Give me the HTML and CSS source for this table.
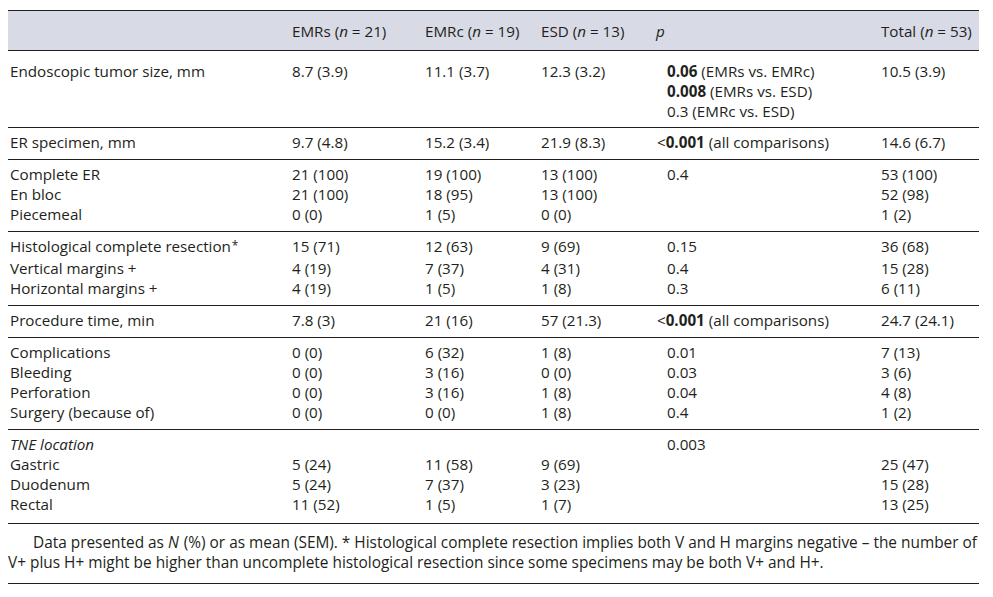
FILE: index.html
```html
<!DOCTYPE html>
<html lang="en">
<head>
<meta charset="utf-8">
<title>Endoscopic resection outcomes</title>
<link rel="stylesheet" href="styles.css">
</head>
<body>
<div class="wrap">
<table class="data">
  <colgroup>
    <col class="c-label"><col class="c-emrs"><col class="c-emrc"><col class="c-esd"><col class="c-p"><col class="c-total">
  </colgroup>
  <thead>
    <tr>
      <th></th>
      <th>EMRs (<i>n</i> = 21)</th>
      <th>EMRc (<i>n</i> = 19)</th>
      <th>ESD (<i>n</i> = 13)</th>
      <th><i>p</i></th>
      <th>Total (<i>n</i> = 53)</th>
    </tr>
  </thead>
  <tbody class="first">
    <tr>
      <td>Endoscopic tumor size, mm</td>
      <td>8.7 (3.9)</td>
      <td>11.1 (3.7)</td>
      <td>12.3 (3.2)</td>
      <td class="pv"><div><b>0.06</b> (EMRs vs. EMRc)</div><div><b>0.008</b> (EMRs vs. ESD)</div><div>0.3 (EMRc vs. ESD)</div></td>
      <td>10.5 (3.9)</td>
    </tr>
  </tbody>
  <tbody>
    <tr>
      <td>ER specimen, mm</td>
      <td>9.7 (4.8)</td>
      <td>15.2 (3.4)</td>
      <td>21.9 (8.3)</td>
      <td class="pl">&lt;<b>0.001</b> (all comparisons)</td>
      <td>14.6 (6.7)</td>
    </tr>
  </tbody>
  <tbody>
    <tr><td>Complete ER</td><td>21 (100)</td><td>19 (100)</td><td>13 (100)</td><td class="pv">0.4</td><td>53 (100)</td></tr>
    <tr><td>En bloc</td><td>21 (100)</td><td>18 (95)</td><td>13 (100)</td><td class="pv"></td><td>52 (98)</td></tr>
    <tr><td>Piecemeal</td><td>0 (0)</td><td>1 (5)</td><td>0 (0)</td><td class="pv"></td><td>1 (2)</td></tr>
  </tbody>
  <tbody>
    <tr><td>Histological complete resection<span class="ast">*</span></td><td>15 (71)</td><td>12 (63)</td><td>9 (69)</td><td class="pv">0.15</td><td>36 (68)</td></tr>
    <tr><td>Vertical margins +</td><td>4 (19)</td><td>7 (37)</td><td>4 (31)</td><td class="pv">0.4</td><td>15 (28)</td></tr>
    <tr><td>Horizontal margins +</td><td>4 (19)</td><td>1 (5)</td><td>1 (8)</td><td class="pv">0.3</td><td>6 (11)</td></tr>
  </tbody>
  <tbody>
    <tr>
      <td>Procedure time, min</td>
      <td>7.8 (3)</td>
      <td>21 (16)</td>
      <td>57 (21.3)</td>
      <td class="pl">&lt;<b>0.001</b> (all comparisons)</td>
      <td>24.7 (24.1)</td>
    </tr>
  </tbody>
  <tbody>
    <tr><td>Complications</td><td>0 (0)</td><td>6 (32)</td><td>1 (8)</td><td class="pv">0.01</td><td>7 (13)</td></tr>
    <tr><td>Bleeding</td><td>0 (0)</td><td>3 (16)</td><td>0 (0)</td><td class="pv">0.03</td><td>3 (6)</td></tr>
    <tr><td>Perforation</td><td>0 (0)</td><td>3 (16)</td><td>1 (8)</td><td class="pv">0.04</td><td>4 (8)</td></tr>
    <tr><td>Surgery (because of)</td><td>0 (0)</td><td>0 (0)</td><td>1 (8)</td><td class="pv">0.4</td><td>1 (2)</td></tr>
  </tbody>
  <tbody class="last">
    <tr><td><i>TNE location</i></td><td></td><td></td><td></td><td class="pv">0.003</td><td></td></tr>
    <tr><td>Gastric</td><td>5 (24)</td><td>11 (58)</td><td>9 (69)</td><td class="pv"></td><td>25 (47)</td></tr>
    <tr><td>Duodenum</td><td>5 (24)</td><td>7 (37)</td><td>3 (23)</td><td class="pv"></td><td>15 (28)</td></tr>
    <tr><td>Rectal</td><td>11 (52)</td><td>1 (5)</td><td>1 (7)</td><td class="pv"></td><td>13 (25)</td></tr>
  </tbody>
</table>
<p class="note">Data presented as <i class="nv">N</i> (%) or as mean (SEM). * Histological complete resection implies both V and H margins negative – the number of V+ plus H+ might be higher than uncomplete histological resection since some specimens may be both V+ and H+.</p>
</div>
</body>
</html>
```
FILE: styles.css
```css
html, body {
  background: #ffffff;
}
body {
  margin: 10px 8px;
  font-family: "Open Sans", "Noto Sans", sans-serif;
  font-size: 15.2px;
  line-height: 20px;
  color: #231f20;
}
.wrap {
  width: 971px;
}
.data {
  width: 971px;
  table-layout: fixed;
  border-collapse: separate;
  border-spacing: 0;
}
.c-label { width: 282px; }
.c-emrs { width: 133px; }
.c-emrc { width: 116px; }
.c-esd { width: 115px; }
.c-p { width: 225px; }
.c-total { width: 100px; }

.data th,
.data td {
  padding: 0 0 0 2px;
  text-align: left;
  vertical-align: top;
  white-space: nowrap;
  font-weight: normal;
}
.data th {
  background: #d8dae6;
  border-top: 1px solid #231f20;
  padding-top: 10px;
  padding-bottom: 9px;
}
.data tbody tr:first-child td {
  border-top: 1px solid #231f20;
  padding-top: 4px;
}
.data tbody tr:last-child td {
  padding-bottom: 7px;
}
.data tbody.first tr:first-child td {
  padding-top: 10px;
  padding-bottom: 6px;
}
.data tbody.last tr:last-child td {
  padding-bottom: 9px;
}
.data td.pv {
  padding-left: 13px;
}
.data td.pl {
  padding-left: 3px;
}
.data b {
  font-weight: 700;
}
.ast {
  font-size: 12px;
  position: relative;
  top: -2px;
  margin-left: 1px;
}
.note {
  margin: 0;
  border-top: 1px solid #231f20;
  border-bottom: 1px solid #231f20;
  padding: 9px 0 10px 0;
  font-size: 15.4px;
  text-indent: 25px;
}
.nv {
  padding-right: 1px;
}
```
